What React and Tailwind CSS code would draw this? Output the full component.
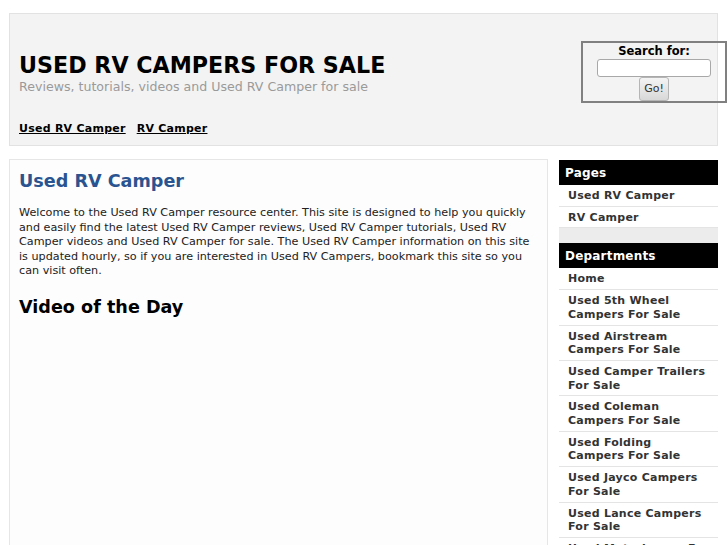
import React from "react";

const font = { fontFamily: '"DejaVu Sans", Verdana, sans-serif' };

const departments = [
  "Home",
  "Used 5th Wheel Campers For Sale",
  "Used Airstream Campers For Sale",
  "Used Camper Trailers For Sale",
  "Used Coleman Campers For Sale",
  "Used Folding Campers For Sale",
  "Used Jayco Campers For Sale",
  "Used Lance Campers For Sale",
  "Used Motorhomes For Sale",
];

function SideBox({ title, items }) {
  return (
    <div className="bg-white">
      <div className="bg-black text-white font-bold text-[12px] h-[25px] flex items-center pl-[6px] tracking-[0.2px]">
        {title}
      </div>
      <ul>
        {items.map((it) => (
          <li
            key={it}
            className="border-b border-[#e4e4e4] pl-[9px] pr-[8px] pt-[4px] pb-[3px] text-[11px] leading-[13.7px] font-bold text-[#333] tracking-[0.25px]"
          >
            {it}
          </li>
        ))}
      </ul>
    </div>
  );
}

export default function App() {
  return (
    <div className="w-[727px] h-[545px] overflow-hidden bg-white text-black" style={font}>
      <div className="pt-[13px] px-[9px]">
        <header className="relative h-[133px] border border-[#e2e2e2] bg-[#f3f3f3]">
          <div className="pl-[9px] pt-[37px]">
            <h1 className="text-[22.2px] leading-[28px] font-bold text-black">USED RV CAMPERS FOR SALE</h1>
            <p className="text-[12.6px] leading-[16px] text-[#9a9a9a] mt-[0px]">
              Reviews, tutorials, videos and Used RV Camper for sale
            </p>
            <nav className="mt-[26px] flex gap-[11px] text-[11px] font-bold tracking-[0.25px]">
              <a className="underline text-black">Used RV Camper</a>
              <a className="underline text-black">RV Camper</a>
            </nav>
          </div>
          <div className="absolute left-[571px] top-[27px] w-[146px] h-[62px] border-2 border-[#808080] flex flex-col items-center">
            <div className="text-[11.5px] font-bold leading-[14px] mt-[1px]">Search for:</div>
            <input
              className="mt-[1px] w-[114px] h-[18px] bg-white border border-[#a8a8a8] rounded-[3px]"
              type="text"
            />
            <button className="mt-[0px] w-[30px] h-[26px] rounded-[3px] border border-[#b5b5b5] bg-gradient-to-b from-[#f4f4f4] to-[#d8d8d8] text-[11px] text-[#333]">
              Go!
            </button>
          </div>
        </header>

        <div className="mt-[13px] flex gap-[11px]">
          <main className="w-[539px] h-[400px] border border-[#e6e6e6] bg-[#fdfdfd] px-[9px] pt-[10px]">
            <h2 className="text-[17.6px] leading-[22px] font-bold text-[#2a5490]">Used RV Camper</h2>
            <p className="mt-[14px] text-[11.2px] leading-[14.6px] text-[#222]">
              Welcome to the Used RV Camper resource center. This site is designed to help you quickly and easily find the latest
              Used RV Camper reviews, Used RV Camper tutorials, Used RV Camper videos and Used RV Camper for sale. The Used RV
              Camper information on this site is updated hourly, so if you are interested in Used RV Campers, bookmark this site so
              you can visit often.
            </p>
            <h3 className="mt-[17px] text-[17.6px] leading-[22px] font-bold text-black">Video of the Day</h3>
          </main>

          <aside className="w-[159px] flex flex-col pt-[1px]">
            <SideBox title="Pages" items={["Used RV Camper", "RV Camper"]} />
            <div className="h-[15px] bg-[#ececec]" />
            <SideBox title="Departments" items={departments} />
          </aside>
        </div>
      </div>
    </div>
  );
}
